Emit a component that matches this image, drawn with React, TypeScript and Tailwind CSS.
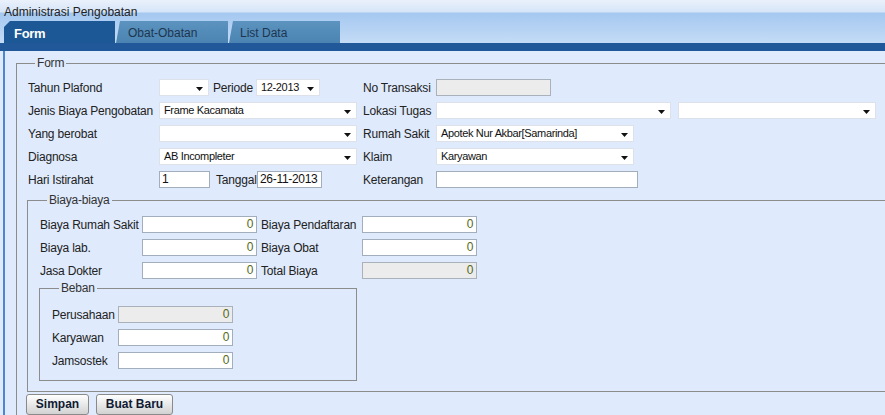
import React from 'react';

const font = "font-['Liberation_Sans',Arial,sans-serif]";
const label = "text-[12px] leading-[14px] tracking-[-0.2px] text-[#222]";

function Arrow() {
    return (
        <svg width="7" height="4" viewBox="0 0 7 4" className="mt-[3px] mr-[5px] shrink-0">
            <path d="M0 0H7L3.5 4Z" fill="#111" />
        </svg>
    );
}

function Select({ w, value }: { w: string; value?: string }) {
    return (
        <div className={`${w} h-[17px] flex items-center bg-white border border-[#dde2ea]`}>
            <span className="flex-1 pl-[4px] text-[11px] leading-[15px] tracking-[-0.35px] text-[#111] truncate">{value}</span>
            <Arrow />
        </div>
    );
}

function Input({ w, value, disabled, num }: { w: string; value?: string; disabled?: boolean; num?: boolean }) {
    return (
        <div
            className={`${w} h-[17px] flex items-center border ${disabled ? 'bg-[#ececec] border-[#a9b1bb]' : 'bg-white border-[#a3aebd]'} ${num ? 'justify-end pr-[3px] text-[#55681a]' : 'pl-[2px] text-[#111]'} text-[12px] leading-[15px] tracking-[-0.3px]`}>
            {value}
        </div>
    );
}

function Label({ w, children }: { w: string; children: React.ReactNode }) {
    return <div className={`${w} shrink-0 whitespace-nowrap ${label}`}>{children}</div>;
}

function Legend({ children }: { children: React.ReactNode }) {
    return <legend className="ml-[8px] px-[2px] text-[12px] leading-[14px] tracking-[-0.2px] text-[#333]">{children}</legend>;
}

export default function App() {
    return (
        <div className={`${font} w-[885px] h-[415px] overflow-hidden bg-[#dfeafc]`}>
            {/* header */}
            <div className="bg-[linear-gradient(to_bottom,#eaf1fb_0px,#d6e5f8_12px,#a5c8f0_13px,#c4dbf6_43px)]">
                <div className={`h-[21px] pl-[4px] pt-[5px] ${label} text-[#1e2c44] tracking-[0px]`}>Administrasi Pengobatan</div>
                <div className="flex h-[22px] pl-[4px] gap-[1px]">
                    <div className="w-[111px] bg-[#1c5895] [clip-path:polygon(0_100%,0_6px,6px_0,100%_0,100%_100%)] pl-[10px] pt-[5px] text-[13px] leading-[15px] font-bold tracking-[-0.3px] text-white">
                        Form
                    </div>
                    <div className="w-[112px] bg-[linear-gradient(to_bottom,#5c93bf,#4b84b2)] [clip-path:polygon(0_100%,4px_0,100%_0,100%_100%)] pl-[12px] pt-[5px] text-[12px] leading-[15px] tracking-[0px] text-[#1d3650]">
                        Obat-Obatan
                    </div>
                    <div className="w-[111px] bg-[linear-gradient(to_bottom,#5c93bf,#4b84b2)] [clip-path:polygon(0_100%,4px_0,100%_0,100%_100%)] pl-[11px] pt-[5px] text-[12px] leading-[15px] tracking-[0px] text-[#1d3650]">
                        List Data
                    </div>
                </div>
                <div className="h-[8px] bg-[#21589a]" />
            </div>

            {/* panel */}
            <div className="ml-[3px] border-l-2 border-[#4a86d2] h-[364px] w-[920px] pl-[11px] pt-[5px]">
                <fieldset className="border border-[#8c8c8c] pl-[10px] pt-[9px] pb-[20px] w-[900px]">
                    <Legend>Form</Legend>
                    <div className="flex flex-col gap-[6px] pl-[1px]">
                        <div className="flex items-center h-[17px]">
                            <Label w="w-[131px]">Tahun Plafond</Label>
                            <Select w="w-[50px]" />
                            <Label w="w-[43px] ml-[4px]">Periode</Label>
                            <Select w="w-[64px]" value="12-2013" />
                            <Label w="w-[73px] ml-[43px]">No Transaksi</Label>
                            <Input w="w-[115px]" disabled />
                        </div>
                        <div className="flex items-center h-[17px]">
                            <Label w="w-[131px]">Jenis Biaya Pengobatan</Label>
                            <Select w="w-[198px]" value="Frame Kacamata" />
                            <Label w="w-[73px] ml-[6px]">Lokasi Tugas</Label>
                            <Select w="w-[235px]" />
                            <div className="w-[7px]" />
                            <Select w="w-[198px]" />
                        </div>
                        <div className="flex items-center h-[17px]">
                            <Label w="w-[131px]">Yang berobat</Label>
                            <Select w="w-[198px]" />
                            <Label w="w-[73px] ml-[6px]">Rumah Sakit</Label>
                            <Select w="w-[198px]" value="Apotek Nur Akbar[Samarinda]" />
                        </div>
                        <div className="flex items-center h-[17px]">
                            <Label w="w-[131px]">Diagnosa</Label>
                            <Select w="w-[198px]" value="AB Incompleter" />
                            <Label w="w-[73px] ml-[6px]">Klaim</Label>
                            <Select w="w-[198px]" value="Karyawan" />
                        </div>
                        <div className="flex items-center h-[17px]">
                            <Label w="w-[131px]">Hari Istirahat</Label>
                            <Input w="w-[51px]" value="1" />
                            <Label w="w-[41px] ml-[6px]">Tanggal</Label>
                            <Input w="w-[65px]" value="26-11-2013" />
                            <Label w="w-[73px] ml-[41px]">Keterangan</Label>
                            <Input w="w-[202px]" />
                        </div>
                    </div>

                    <fieldset className="mt-[5px] border border-[#8c8c8c] pl-[11px] pt-[9px] pb-[10px]">
                        <Legend>Biaya-biaya</Legend>
                        <div className="flex flex-col gap-[6px] pl-[1px]">
                            {[
                                ['Biaya Rumah Sakit', 'Biaya Pendaftaran', false],
                                ['Biaya lab.', 'Biaya Obat', false],
                                ['Jasa Dokter', 'Total Biaya', true],
                            ].map(([a, b, dis]) => (
                                <div key={a as string} className="flex items-center h-[17px]">
                                    <Label w="w-[102px]">{a as string}</Label>
                                    <Input w="w-[115px]" value="0" num />
                                    <Label w="w-[101px] ml-[4px]">{b as string}</Label>
                                    <Input w="w-[115px]" value="0" num disabled={dis as boolean} />
                                </div>
                            ))}
                        </div>

                        <fieldset className="mt-[2px] w-[318px] border border-[#8c8c8c] pl-[11px] pt-[11px] pb-[11px]">
                            <Legend>Beban</Legend>
                            <div className="flex flex-col gap-[6px] pl-[1px]">
                                <div className="flex items-center h-[17px]">
                                    <Label w="w-[66px]">Perusahaan</Label>
                                    <Input w="w-[115px]" value="0" num disabled />
                                </div>
                                <div className="flex items-center h-[17px]">
                                    <Label w="w-[66px]">Karyawan</Label>
                                    <Input w="w-[115px]" value="0" num />
                                </div>
                                <div className="flex items-center h-[17px]">
                                    <Label w="w-[66px]">Jamsostek</Label>
                                    <Input w="w-[115px]" value="0" num />
                                </div>
                            </div>
                        </fieldset>
                    </fieldset>

                    <div className="flex gap-[7px] mt-[2px] -ml-[1px]">
                        <button className="w-[63px] h-[21px] rounded-[3px] border border-[#8a8a8a] bg-[linear-gradient(to_bottom,#ffffff,#e4e4e4_60%,#d2d2d2)] text-[12px] leading-[15px] font-bold text-[#101a33]">
                            Simpan
                        </button>
                        <button className="w-[77px] h-[21px] rounded-[3px] border border-[#8a8a8a] bg-[linear-gradient(to_bottom,#ffffff,#e4e4e4_60%,#d2d2d2)] text-[12px] leading-[15px] font-bold text-[#101a33]">
                            Buat Baru
                        </button>
                    </div>
                </fieldset>
            </div>
        </div>
    );
}
